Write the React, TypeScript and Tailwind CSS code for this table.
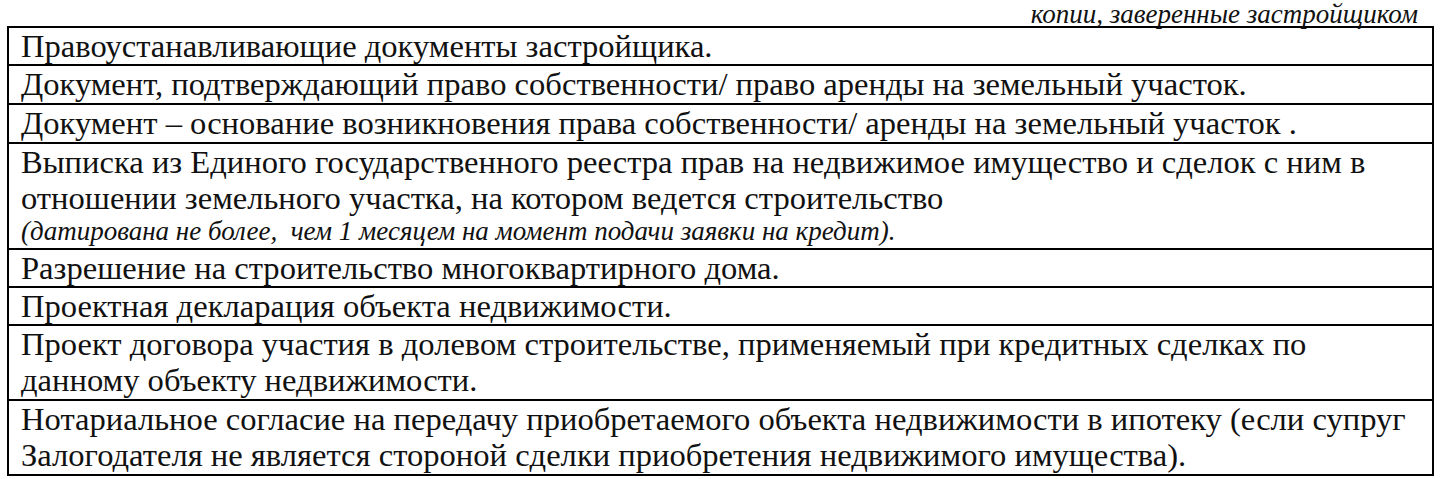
import React from "react";

const rows: { lines: string[]; note?: string; h: string }[] = [
  { lines: ["Правоустанавливающие документы застройщика."], h: "h-[38px]" },
  { lines: ["Документ, подтверждающий право собственности/ право аренды на земельный участок."], h: "h-[39px]" },
  { lines: ["Документ – основание возникновения права собственности/ аренды на земельный участок ."], h: "h-[39px]" },
  {
    lines: [
      "Выписка из Единого государственного реестра прав на недвижимое имущество и сделок с ним в",
      "отношении земельного участка, на котором ведется строительство",
    ],
    note: "(датирована не более,  чем 1 месяцем на момент подачи заявки на кредит).",
    h: "h-[106px]",
  },
  { lines: ["Разрешение на строительство многоквартирного дома."], h: "h-[38px]" },
  { lines: ["Проектная декларация объекта недвижимости."], h: "h-[38px]" },
  {
    lines: [
      "Проект договора участия в долевом строительстве, применяемый при кредитных сделках по",
      "данному объекту недвижимости.",
    ],
    h: "h-[75px]",
  },
  {
    lines: [
      "Нотариальное согласие на передачу приобретаемого объекта недвижимости в ипотеку (если супруг",
      "Залогодателя не является стороной сделки приобретения недвижимого имущества).",
    ],
    h: "h-[75px]",
  },
];

export default function App() {
  return (
    <div className="w-[1442px] h-[479px] bg-white text-[#111]" style={{ fontFamily: '"Liberation Serif", "Times New Roman", serif' }}>
      <div className="h-[26px] flex items-end justify-end pr-[24px] italic text-[27px] leading-[24px] whitespace-nowrap">
        копии, заверенные застройщиком
      </div>
      <div className="ml-[7px] w-[1427px] border-2 border-black border-b-0">
        {rows.map((r, i) => (
          <div key={i} className={`${r.h} border-b-2 border-black pl-[12px] flex flex-col overflow-hidden`}>
            {r.lines.map((l, j) => (
              <div key={j} className="text-[32.6px] leading-[36px] whitespace-pre">{l}</div>
            ))}
            {r.note && (
              <div className="text-[27px] leading-[30px] italic whitespace-pre">{r.note}</div>
            )}
          </div>
        ))}
      </div>
    </div>
  );
}
